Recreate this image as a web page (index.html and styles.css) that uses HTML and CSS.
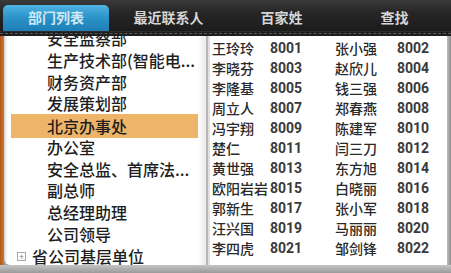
FILE: index.html
```html
<!DOCTYPE html>
<html lang="zh-CN">
<head>
<meta charset="utf-8">
<title>通讯录</title>
<link rel="stylesheet" href="styles.css">
</head>
<body>
<div class="screen">
  <nav class="tabs">
    <div class="tab active">部门列表</div>
    <div class="tab">最近联系人</div>
    <div class="tab">百家姓</div>
    <div class="tab">查找</div>
  </nav>
  <div class="rule"></div>
  <main class="main">
    <div class="edge"></div>
    <section class="dept">
      <ul class="dept-list">
        <li class="item">安全监察部</li>
        <li class="item">生产技术部(智能电...</li>
        <li class="item">财务资产部</li>
        <li class="item">发展策划部</li>
        <li class="item selected"><span class="hl">北京办事处</span></li>
        <li class="item">办公室</li>
        <li class="item">安全总监、首席法...</li>
        <li class="item">副总师</li>
        <li class="item">总经理助理</li>
        <li class="item">公司领导</li>
        <li class="item group"><span class="plus">+</span>省公司基层单位</li>
      </ul>
    </section>
    <div class="divider"></div>
    <section class="people">
      <div class="grid">
        <span class="nm">王玲玲</span><span class="no">8001</span><span class="nm">张小强</span><span class="no">8002</span>
        <span class="nm">李晓芬</span><span class="no">8003</span><span class="nm">赵欣儿</span><span class="no">8004</span>
        <span class="nm">李隆基</span><span class="no">8005</span><span class="nm">钱三强</span><span class="no">8006</span>
        <span class="nm">周立人</span><span class="no">8007</span><span class="nm">郑春燕</span><span class="no">8008</span>
        <span class="nm">冯宇翔</span><span class="no">8009</span><span class="nm">陈建军</span><span class="no">8010</span>
        <span class="nm">楚仁</span><span class="no">8011</span><span class="nm">闫三刀</span><span class="no">8012</span>
        <span class="nm">黄世强</span><span class="no">8013</span><span class="nm">东方旭</span><span class="no">8014</span>
        <span class="nm">欧阳岩岩</span><span class="no">8015</span><span class="nm">白晓丽</span><span class="no">8016</span>
        <span class="nm">郭新生</span><span class="no">8017</span><span class="nm">张小军</span><span class="no">8018</span>
        <span class="nm">汪兴国</span><span class="no">8019</span><span class="nm">马丽丽</span><span class="no">8020</span>
        <span class="nm">李四虎</span><span class="no">8021</span><span class="nm">邹剑锋</span><span class="no">8022</span>
      </div>
    </section>
    <div class="right-edge"></div>
  </main>
  <div class="bottom"></div>
</div>
</body>
</html>
```

FILE: styles.css
```css
* { box-sizing: border-box; }
html, body { margin: 0; padding: 0; }
body {
  width: 451px;
  height: 273px;
  overflow: hidden;
  background: #9a9a9a;
  font-family: "Noto Sans CJK SC", "Noto Sans", sans-serif;
}
.screen {
  display: flex;
  flex-direction: column;
  height: 273px;
}
.tabs {
  height: 31px;
  display: grid;
  grid-template-columns: 112px 113px 113px 113px;
  padding-top: 5px;
  background: linear-gradient(#3a3a3a, #262626 40%, #1c1c1c);
}
.tab {
  display: flex;
  align-items: center;
  justify-content: center;
  font-size: 14px;
  font-weight: 700;
  color: #d6d6d6;
  padding-bottom: 2px;
}
.tab.active {
  margin: 0 3px 0 3px;
  border-radius: 5px 5px 0 0;
  background: linear-gradient(#50b4e2, #2a92c8 50%, #1f7fb6);
  color: #cfe8f4;
}
.rule {
  height: 5px;
  background: #1e1e1e;
  border-top: 1px solid #2c2c2c;
  position: relative;
}
.rule::after {
  content: "";
  position: absolute;
  left: 0; right: 0; top: 1px;
  border-top: 1px dashed #5a5a5a;
}
.main {
  display: flex;
  height: 229px;
}
.edge {
  width: 4px;
  background: linear-gradient(90deg, #b4561c, #d2782e);
}
.dept {
  width: 202px;
  background: linear-gradient(90deg, #c8c8c8 0, #f2f2f2 2px, #fff 4px, #fff 96%, #eaeaea);
  border-bottom-left-radius: 6px;
  overflow: hidden;
}
.dept-list {
  list-style: none;
  margin: -8px 0 0 0;
  padding: 0 0 0 3px;
}
.item {
  height: 21.75px;
  line-height: 21.75px;
  font-size: 16px;
  font-weight: 500;
  color: #1e1e1e;
  padding-left: 40px;
  white-space: nowrap;
}
.item.selected {
  padding: 0 8px 0 4px;
  display: flex;
  align-items: center;
}
.hl {
  flex: 1;
  height: 24px;
  line-height: 24px;
  padding-left: 36px;
  background: #eeb468;
}
.item.group {
  padding-left: 10px;
  display: flex;
  align-items: center;
  gap: 6px;
}
.plus {
  width: 9px;
  height: 9px;
  border: 1px solid #aaa;
  font-size: 9px;
  line-height: 7px;
  text-align: center;
  color: #888;
  font-weight: 400;
}
.divider {
  width: 2px;
  background: #b8b8b8;
}
.people {
  flex: 1;
  background: #fff;
  border-left: 2px solid #e0e0e0;
  overflow: hidden;
}
.grid {
  display: grid;
  grid-template-columns: 58px 65px 62px auto;
  grid-auto-rows: 20px;
  padding: 2px 0 0 2px;
  align-items: center;
}
.nm {
  font-size: 14px;
  color: #2a2a2a;
  font-weight: 500;
  white-space: nowrap;
}
.no {
  font-family: Roboto, "Liberation Sans", sans-serif;
  font-size: 14px;
  font-weight: 700;
  color: #3a3a3a;
}
.right-edge {
  width: 4px;
  background: linear-gradient(90deg, #bdbdbd, #8e8e8e);
}
.bottom {
  flex: 1;
  background: linear-gradient(#c4c4c4, #9a9a9a);
}
```
